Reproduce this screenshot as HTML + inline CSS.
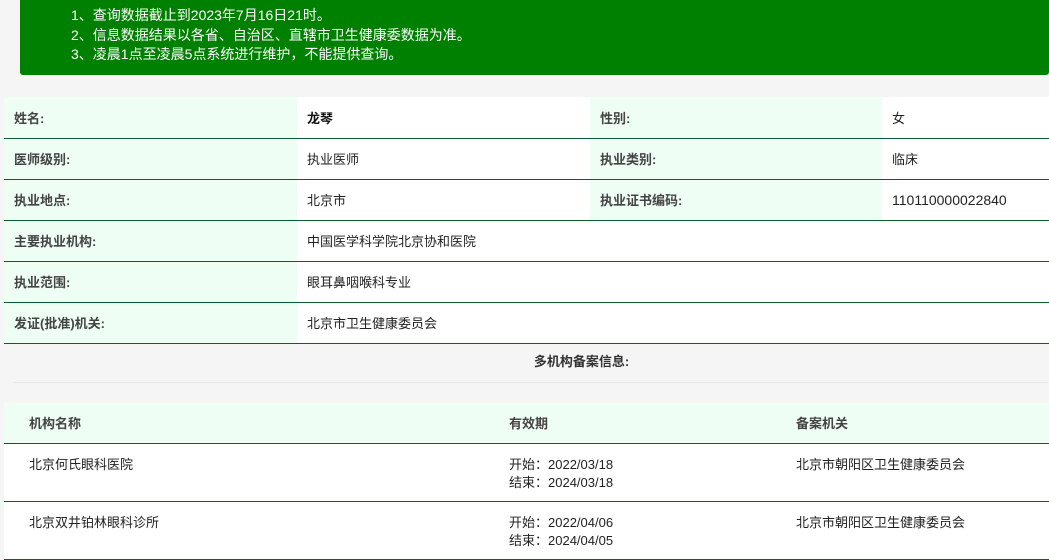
<!DOCTYPE html>
<html><head><meta charset="utf-8">
<style>
*{margin:0;padding:0;box-sizing:border-box}
body{width:1049px;height:555px;overflow:hidden;background:#f5f5f5;font-family:"Liberation Sans","Noto Sans CJK SC",sans-serif;font-size:13px;color:#333;position:relative}
.banner{position:absolute;left:20px;top:0;width:1029px;height:75px;background:#008000;border-radius:0 0 3px 3px;color:#fff;font-size:14px;line-height:19.5px;padding-top:6px;padding-left:51px}
.info{position:absolute;left:4px;top:97px;width:1045px;border-collapse:collapse;table-layout:fixed}
.info td{height:41px;border-bottom:1px solid #0b5e2e;padding:0 10px;vertical-align:middle}
.info td.l{background:#effef5;font-weight:bold;color:#444}
.info td.v{background:#fff;color:#222}
.sec{position:absolute;left:14px;top:343px;width:1035px;height:40px;border-bottom:1px solid #e6e6e6;text-align:center;font-weight:bold;line-height:38px;padding-left:100px}
.rec{position:absolute;left:4px;top:403px;width:1045px;border-collapse:collapse;table-layout:fixed;background:#fff}
.rec th{background:#effef5;height:40px;text-align:left;font-weight:bold;color:#444;padding-left:25px;border-bottom:1px solid #0b5e2e}
.rec td{height:58px;vertical-align:top;padding:12px 0 0 25px;border-bottom:1px solid #0b5e2e;line-height:18px;color:#222}
</style></head><body>
<div class="banner">1、查询数据截止到2023年7月16日21时。<br>2、信息数据结果以各省、自治区、直辖市卫生健康委数据为准。<br>3、凌晨1点至凌晨5点系统进行维护，不能提供查询。</div>
<table class="info">
<colgroup><col style="width:293px"><col style="width:293px"><col style="width:292px"><col></colgroup>
<tr><td class="l">姓名:</td><td class="v" style="font-weight:bold;color:#111">龙琴</td><td class="l">性别:</td><td class="v">女</td></tr>
<tr><td class="l">医师级别:</td><td class="v">执业医师</td><td class="l">执业类别:</td><td class="v">临床</td></tr>
<tr><td class="l">执业地点:</td><td class="v">北京市</td><td class="l">执业证书编码:</td><td class="v" style="font-size:14px">110110000022840</td></tr>
<tr><td class="l">主要执业机构:</td><td class="v" colspan="3">中国医学科学院北京协和医院</td></tr>
<tr><td class="l">执业范围:</td><td class="v" colspan="3">眼耳鼻咽喉科专业</td></tr>
<tr><td class="l">发证(批准)机关:</td><td class="v" colspan="3">北京市卫生健康委员会</td></tr>
</table>
<div class="sec">多机构备案信息:</div>
<table class="rec">
<colgroup><col style="width:480px"><col style="width:287px"><col></colgroup>
<tr><th>机构名称</th><th>有效期</th><th>备案机关</th></tr>
<tr><td>北京何氏眼科医院</td><td>开始：2022/03/18<br>结束：2024/03/18</td><td>北京市朝阳区卫生健康委员会</td></tr>
<tr><td>北京双井铂林眼科诊所</td><td>开始：2022/04/06<br>结束：2024/04/05</td><td>北京市朝阳区卫生健康委员会</td></tr>
</table>
</body></html>
